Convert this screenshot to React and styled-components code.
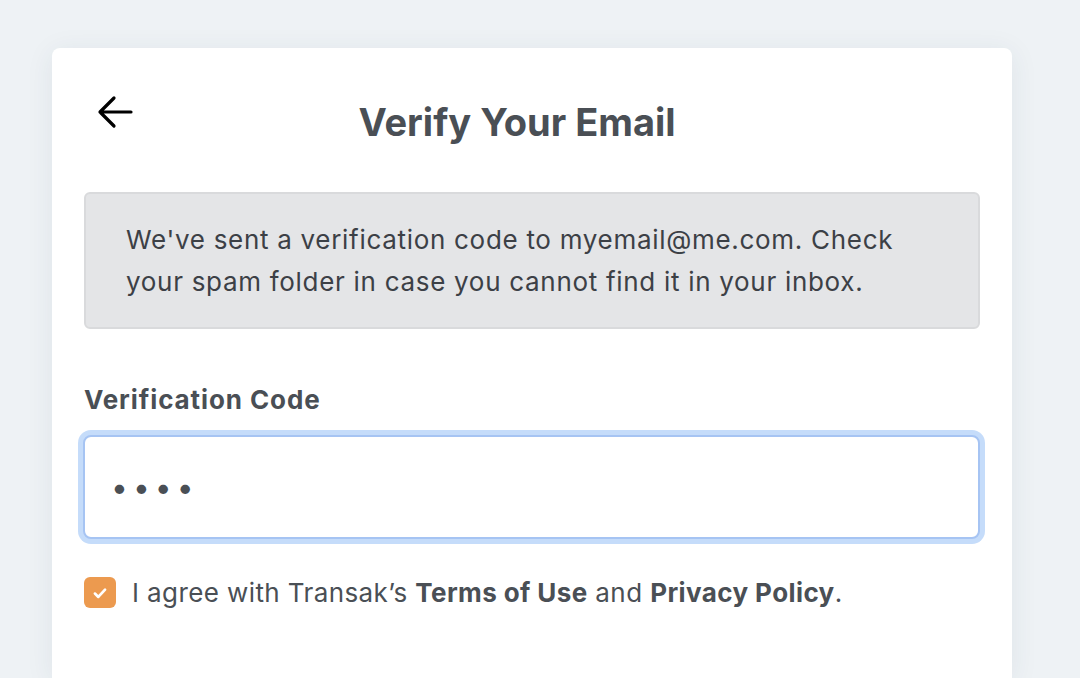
import React from 'react'
import styled, { createGlobalStyle } from 'styled-components'

const GlobalStyle = createGlobalStyle`
  html, body {
    margin: 0;
    background: #eef2f5;
    font-family: Inter, "Noto Sans", sans-serif;
    height: 100%;
    overflow: hidden;
  }
`;

const Page = styled.div`
  padding: 48px 68px 0 52px;
`;

const Card = styled.div`
  width: 960px;
  height: 630px;
  box-sizing: border-box;
  background: #fff;
  border-radius: 8px 8px 0 0;
  box-shadow: 0 4px 28px rgba(40, 60, 90, 0.08);
  padding: 44px 32px 0 32px;
`;

const Header = styled.div`
  display: grid;
  grid-template-columns: 60px 1fr 90px;
  align-items: center;
  height: 60px;
`;

const BackButton = styled.button`
  border: none;
  background: none;
  padding: 0;
  margin-left: 13px;
  margin-top: -20px;
  width: 36px;
  height: 36px;
  display: flex;
  cursor: pointer;
`;

const Title = styled.h1`
  margin: 0;
  text-align: center;
  font-size: 38px;
  font-weight: 700;
  color: #4a4f55;
`;

const Notice = styled.div`
  margin-top: 40px;
  background: #e4e5e7;
  border: 2px solid #d9dadc;
  border-radius: 6px;
  padding: 25px 40px 24px 40px;
  font-size: 26px;
  letter-spacing: 0.7px;
  line-height: 42px;
  color: #3c4046;
`;

const Label = styled.label`
  display: block;
  margin-top: 55px;
  font-size: 26px;
  font-weight: 700;
  letter-spacing: 0.9px;
  color: #4a4f55;
`;

const Input = styled.input`
  display: block;
  box-sizing: border-box;
  width: 897px;
  height: 104px;
  margin: 20px 0 0 -1px;
  border: 2px solid #a6c4f3;
  border-radius: 8px;
  box-shadow: 0 0 0 5px #c5dcfa;
  padding: 0 26px;
  font-size: 30px;
  letter-spacing: 5px;
  color: #4a4f55;
  outline: none;
  font-family: inherit;
`;

const Agree = styled.div`
  display: flex;
  align-items: center;
  gap: 16px;
  margin-top: 38px;
  font-size: 26px;
  letter-spacing: 0.4px;
  color: #4a4f55;

  b {
    font-weight: 700;
  }
`;

const Check = styled.span`
  width: 32px;
  height: 31px;
  border-radius: 6px;
  background: #ec9a4f;
  display: flex;
  align-items: center;
  justify-content: center;
  flex-shrink: 0;
`;

export default function App() {
  return (
    <>
      <GlobalStyle />
      <Page>
        <Card>
          <Header>
            <BackButton aria-label="Back">
              <svg width="36" height="36" viewBox="0 0 36 36" fill="none" stroke="#000" strokeWidth="3.2" strokeLinecap="round" strokeLinejoin="round">
                <path d="M34 18H3M17 4L3 18l14 14" />
              </svg>
            </BackButton>
            <Title>Verify Your Email</Title>
            <span />
          </Header>
          <Notice>
            We've sent a verification code to myemail@me.com. Check your spam folder in case you cannot find it in your inbox.
          </Notice>
          <Label>Verification Code</Label>
          <Input type="password" defaultValue="1234" />
          <Agree>
            <Check>
              <svg width="18" height="18" viewBox="0 0 16 16" fill="none" stroke="#fff" strokeWidth="2.4" strokeLinecap="round" strokeLinejoin="round">
                <path d="M3.5 8.5l3 3 6-6.5" />
              </svg>
            </Check>
            <span>I agree with Transak’s <b>Terms of Use</b> and <b>Privacy Policy</b>.</span>
          </Agree>
        </Card>
      </Page>
    </>
  )
}
